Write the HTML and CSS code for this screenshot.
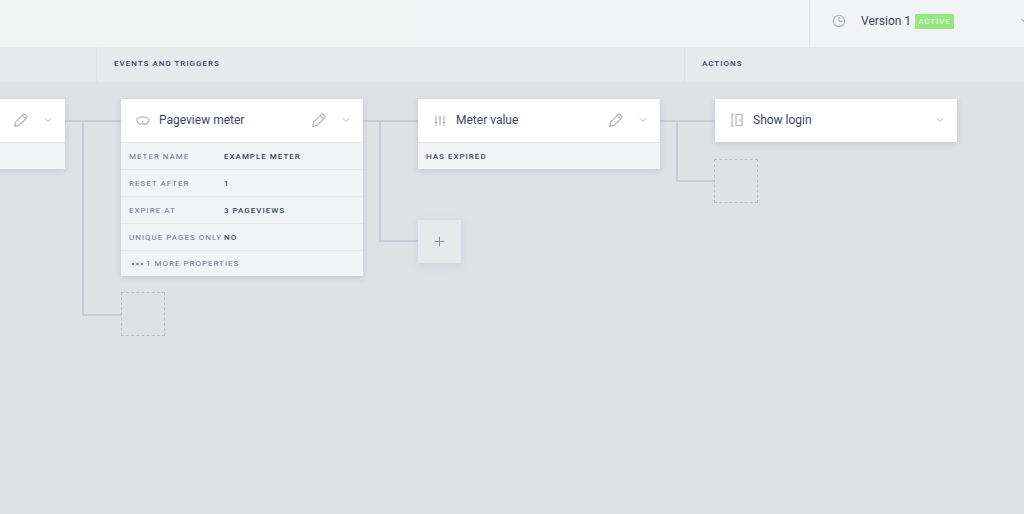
FILE: index.html
```html
<!DOCTYPE html>
<html lang="en">
<head>
<meta charset="utf-8">
<title>Scenario builder</title>
<link rel="stylesheet" href="styles.css">
</head>
<body>
<svg class="symbols" aria-hidden="true">
  <symbol id="pencil" viewBox="0 0 16 16"><path d="M1.700 14.300l.9-4.200 7.700-7.700q.8-.8 1.700 0l1.700 1.700q.8.8 0 1.700L6 13.400zM9.300 3.400l3.300 3.300"/></symbol>
  <symbol id="chevron" viewBox="0 0 8 8"><path d="M1 2.500l3 3 3-3"/></symbol>
  <symbol id="meter" viewBox="0 0 16 16"><path d="M4.800 12.300L2.200 9.800Q1 7 4 5.700q4-1.500 8 0 3 1.300 1.800 4.100l-2.600 2.500M4.800 12.300q1.700.6 1.700-.8M11.200 12.300q-1.700.6-1.700-.8M8 9v3.500"/></symbol>
  <symbol id="sliders" viewBox="0 0 16 16"><path d="M4 4v9M8 4v9M12 4v9M3 10.500h2M7 6h2M11 10.500h2"/></symbol>
  <symbol id="door" viewBox="0 0 16 16"><path d="M5 2H3v12h2M7 2.500v11M7 2.500h6v11H7M11 7.500v1.500"/></symbol>
</svg>
<header class="topbar">
  <button class="version" type="button">
    <svg class="clock" viewBox="0 0 14 14"><circle cx="7" cy="7" r="5.700"/><path d="M7 3.500V7.300h3"/></svg>
    <span class="version-name">Version 1</span>
    <span class="badge">ACTIVE</span>
    <svg class="chevron version-chevron"><use href="#chevron"/></svg>
  </button>
</header>
<div class="columns">
  <div class="column column-start"></div>
  <h2 class="column column-events">EVENTS AND TRIGGERS</h2>
  <h2 class="column column-actions">ACTIONS</h2>
</div>
<main class="canvas">
  <svg class="links" aria-hidden="true">
    <path d="M65 39H121M83 39V233H121M363 39H418M380 39V159H418M660 39H715M677 39V99H715"/>
  </svg>
  <article class="node node-source">
    <div class="node-head">
      <span class="node-title"></span>
      <button class="icon-button" type="button" aria-label="Edit"><svg class="icon"><use href="#pencil"/></svg></button>
      <button class="icon-button" type="button" aria-label="Expand"><svg class="chevron"><use href="#chevron"/></svg></button>
    </div>
    <div class="node-row"></div>
  </article>
  <article class="node node-pageview">
    <div class="node-head">
      <svg class="icon"><use href="#meter"/></svg>
      <h3 class="node-title">Pageview meter</h3>
      <button class="icon-button" type="button" aria-label="Edit"><svg class="icon"><use href="#pencil"/></svg></button>
      <button class="icon-button" type="button" aria-label="Expand"><svg class="chevron"><use href="#chevron"/></svg></button>
    </div>
    <dl class="node-list">
      <div class="node-row"><dt class="key">METER NAME</dt><dd class="value">EXAMPLE METER</dd></div>
      <div class="node-row"><dt class="key">RESET AFTER</dt><dd class="value">1</dd></div>
      <div class="node-row"><dt class="key">EXPIRE AT</dt><dd class="value">3 PAGEVIEWS</dd></div>
      <div class="node-row"><dt class="key">UNIQUE PAGES ONLY</dt><dd class="value">NO</dd></div>
    </dl>
    <button class="node-row more" type="button"><svg class="dots" viewBox="0 0 14 4"><circle cx="2" cy="2" r="1.200"/><circle cx="6.500" cy="2" r="1.200"/><circle cx="11" cy="2" r="1.200"/></svg>1 MORE PROPERTIES</button>
  </article>
  <article class="node node-value">
    <div class="node-head">
      <svg class="icon"><use href="#sliders"/></svg>
      <h3 class="node-title">Meter value</h3>
      <button class="icon-button" type="button" aria-label="Edit"><svg class="icon"><use href="#pencil"/></svg></button>
      <button class="icon-button" type="button" aria-label="Expand"><svg class="chevron"><use href="#chevron"/></svg></button>
    </div>
    <div class="node-row"><span class="value">HAS EXPIRED</span></div>
  </article>
  <article class="node node-login">
    <div class="node-head">
      <svg class="icon"><use href="#door"/></svg>
      <h3 class="node-title">Show login</h3>
      <button class="icon-button" type="button" aria-label="Expand"><svg class="chevron"><use href="#chevron"/></svg></button>
    </div>
  </article>
  <div class="slot slot-pageview"></div>
  <div class="slot slot-login"></div>
  <button class="add" type="button" aria-label="Add step"><svg class="plus" viewBox="0 0 11 11"><path d="M5.500 1v9M1 5.500h9"/></svg></button>
</main>
</body>
</html>
```
FILE: styles.css
```css
* { box-sizing: border-box; }
body {
  margin: 0;
  min-height: 100vh;
  display: flex;
  flex-direction: column;
  overflow: hidden;
  background: #e0e1e5;
  color: #3d4464;
  font-family: Roboto, "Liberation Sans", sans-serif;
}
h2, h3, dl, dd { margin: 0; }
button {
  margin: 0;
  border: 0;
  padding: 0;
  background: none;
  color: inherit;
  font: inherit;
}
svg {
  flex: none;
  fill: none;
  stroke: #b4b5b8;
  stroke-linecap: round;
  stroke-linejoin: round;
}
.symbols { position: absolute; width: 0; height: 0; }
.icon { width: 16px; height: 16px; stroke-width: 1.200; }
.chevron { width: 8px; height: 8px; }

.topbar {
  display: flex;
  justify-content: flex-end;
  height: 47px;
  overflow: hidden;
  background: linear-gradient(90deg, #f3f4f4, #f1f3f4);
}
.version {
  display: flex;
  align-items: center;
  width: 220px;
  margin-right: -5px;
  padding: 0 0 5px 22px;
  border-left: 1px solid #e2e4e8;
  font-size: 12px;
}
.clock { width: 14px; height: 14px; stroke-width: 1.200; }
.version-name { margin-left: 15px; }
.badge {
  margin-left: 4px;
  padding: 0 3px;
  border-radius: 1px;
  background: #95e880;
  color: #f1fff0;
  font-size: 8px;
  line-height: 15px;
  letter-spacing: 1px;
}
.version-chevron { margin-left: auto; stroke: #85888f; }

.columns {
  display: flex;
  height: 35px;
  background: #e8e9eb;
}
.column {
  padding-left: 17px;
  border-right: 1px solid #dfe1e5;
  font-size: 8px;
  font-weight: 500;
  line-height: 34px;
  letter-spacing: 1px;
}
.column-start { width: 97px; }
.column-events { width: 588px; }
.column-actions { flex: 1; border-right: 0; }

.canvas { position: relative; flex: 1; }
.links {
  position: absolute;
  width: 100%;
  height: 100%;
  stroke: #c6ccdb;
  stroke-width: 2;
  stroke-linecap: butt;
  stroke-linejoin: miter;
}
.node {
  position: absolute;
  top: 17px;
  width: 242px;
  background: #f2f3f5;
  box-shadow: 0 2px 6px rgba(50, 60, 90, 0.160);
}
.node-source { left: -177px; }
.node-pageview { left: 121px; }
.node-value { left: 418px; }
.node-login { left: 715px; }
.node-head {
  display: flex;
  align-items: center;
  height: 43px;
  padding: 0 13px 1px 14px;
  background: #fff;
}
.node-title {
  flex: 1;
  margin-left: 8px;
  font-size: 12px;
  font-weight: 400;
}
.icon-button { display: flex; }
.icon-button + .icon-button { margin-left: 15px; }
.node-row {
  display: flex;
  align-items: center;
  width: 100%;
  height: 27px;
  padding-left: 8px;
  border-top: 1px solid #e7e8eb;
  font-size: 8px;
  letter-spacing: 1px;
  white-space: nowrap;
}
.key { width: 95px; color: #70758c; }
.value { font-weight: 500; }
.more { height: 26px; color: #70758c; }
.dots {
  width: 14px;
  height: 4px;
  margin: 0 1px 0 2px;
  fill: #70758c;
  stroke: none;
}
.slot {
  position: absolute;
  width: 44px;
  height: 44px;
  border: 1px dashed #b3bfd9;
}
.slot-pageview { top: 210px; left: 121px; }
.slot-login { top: 77px; left: 714px; }
.add {
  position: absolute;
  top: 138px;
  left: 418px;
  display: flex;
  align-items: center;
  justify-content: center;
  width: 43px;
  height: 43px;
  background: #e8e9eb;
  box-shadow: 0 2px 8px rgba(130, 160, 200, 0.240);
}
.plus { width: 11px; height: 11px; stroke: #8c8d91; }
```
